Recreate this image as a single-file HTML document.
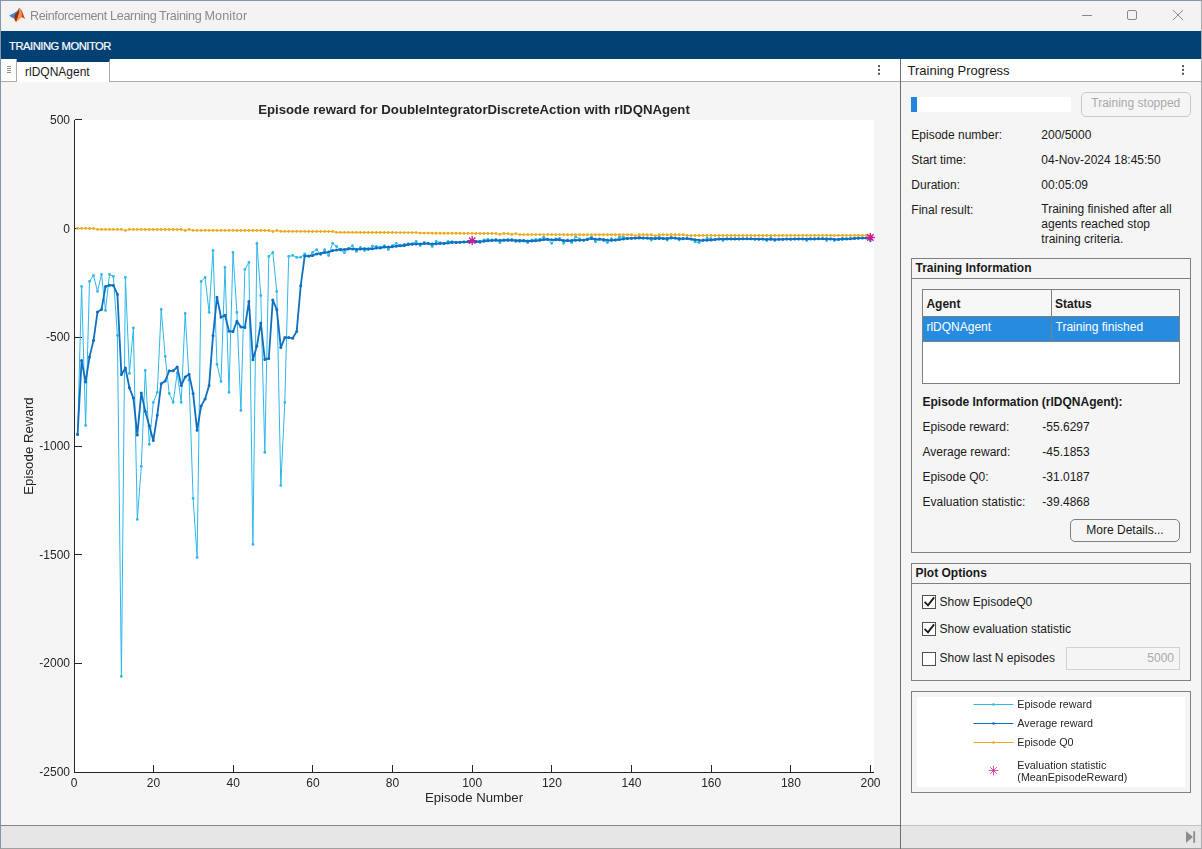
<!DOCTYPE html>
<html lang="en">
<head>
<meta charset="utf-8">
<title>Reinforcement Learning Training Monitor</title>
<style>
*{box-sizing:border-box;margin:0;padding:0}
html,body{width:1202px;height:849px;overflow:hidden;background:#f5f5f5}
body{font-family:"Liberation Sans",Arial,sans-serif;font-size:12px;color:#1a1a1a;position:relative}
.abs{position:absolute}
#win{position:absolute;left:0;top:0;width:1202px;height:849px;border:1px solid #8496a9;border-bottom-color:#a0a0a0;border-right-color:#a9abae;overflow:hidden}
#titlebar{left:1px;top:1px;width:1200px;height:30px;background:#f3f3f3}
#wtitle{will-change:transform;left:30.3px;top:8.7px;width:230px;height:16px;font-size:12.6px;color:#8a8a8a;white-space:nowrap;letter-spacing:-0.3px}
#band{left:1px;top:31px;width:1200px;height:28px;background:#004073}
#bandtxt{-webkit-text-stroke:0.2px #fff;left:9px;top:40.2px;font-size:11.2px;color:#fff;white-space:nowrap;letter-spacing:-0.45px}
#tabbar{left:1px;top:59px;width:899px;height:23px;background:#fff;border-bottom:1px solid #ababab}
#grip{left:1px;top:59px;width:16px;height:23px;background:#fff;border-right:1px solid #ababab;border-bottom:1px solid #ababab}
#tab{left:17px;top:59px;width:93px;height:23px;background:#fff;border-top:3px solid #004073;border-right:1px solid #ababab}
#tabtxt{left:25px;top:64.5px;font-size:12px;white-space:nowrap}
#rhead{left:901px;top:59px;width:300px;height:23px;background:#fff;border-bottom:1px solid #ababab}
#rheadtxt{left:907.5px;top:63px;font-size:13px;white-space:nowrap}
#vdiv{left:900px;top:59px;width:1px;height:790px;background:#6e6e6e}
.status{top:825px;height:23px;background:#e6e6e6;border-top:1px solid #b9b9b9}
.t{position:absolute;white-space:nowrap;line-height:14px}
.b{font-weight:bold}
.panel{position:absolute;border:1px solid #7f7f7f}
.ptitle{position:absolute;left:0;top:0;right:0;height:20px;border-bottom:1px solid #7f7f7f}
.cb{position:absolute;width:14px;height:14px;border:1px solid #505050;background:#fff}
</style>
</head>
<body>
<div id="win"></div>
<div id="titlebar" class="abs"></div>
<svg class="abs" style="left:4px;top:2px" width="30" height="26" viewBox="4 2 30 26">
  <defs>
    <linearGradient id="lgb" x1="0" y1="0" x2="1" y2="0"><stop offset="0" stop-color="#3a9ae6"/><stop offset="0.6" stop-color="#2a7fd0"/><stop offset="1" stop-color="#1d4f96"/></linearGradient>
    <linearGradient id="lgr" x1="0" y1="0" x2="1" y2="1"><stop offset="0" stop-color="#6e1712"/><stop offset="0.55" stop-color="#a52a1a"/><stop offset="1" stop-color="#e8651f"/></linearGradient>
    <linearGradient id="lgo" x1="0" y1="0" x2="0" y2="1"><stop offset="0" stop-color="#e8871f"/><stop offset="0.6" stop-color="#f19a2e"/><stop offset="1" stop-color="#f6b21f"/></linearGradient>
  </defs>
  <path d="M9.05,15.5 L11.65,14.2 L14.1,13 L16.2,11.8 L17.8,10.3 L19,8.1 L19,8.8 L17.9,11.1 L16.3,12.7 L14.8,14.4 L14.3,16.4 L14.1,18.2 L11.65,17.6 Z" fill="url(#lgb)"/>
  <path d="M19,8.8 L19.6,7.7 L19.5,12 L18.2,17 L16.2,22.3 L15,20.6 L14.1,18.2 L14.3,16.4 L14.8,14.4 L16.3,12.7 L17.9,11.1 Z" fill="url(#lgr)"/>
  <path d="M19.6,7.7 L20.7,9 L21.6,13.5 L21.3,17.2 L19.2,19.6 L16.2,22.3 L18.2,17 L19.5,12 Z" fill="url(#lgo)"/>
  <path d="M20.7,9 L22.4,12 L23.9,16 L25.1,19.2 L23.3,17.7 L21.3,17.2 L21.6,13.5 Z" fill="#cc4320"/>
</svg>
<div id="wtitle" class="abs"><span style="position:absolute;left:0;letter-spacing:-0.39px">Reinforcement </span><span style="position:absolute;left:80.1px;letter-spacing:-0.35px">Learning </span><span style="position:absolute;left:129.1px;letter-spacing:-0.35px">Training </span><span style="position:absolute;left:174.5px;letter-spacing:0.1px">Monitor</span></div>
<svg class="abs" style="left:1070px;top:1px" width="130" height="30" viewBox="1070 1 130 30" fill="none" stroke="#8a8a8a" stroke-width="1">
  <path d="M1082,15.5H1092"/>
  <rect x="1127.5" y="10.5" width="9" height="9" rx="1.5"/>
  <path d="M1173,10.2L1183,20M1183,10.2L1173,20"/>
</svg>
<div id="band" class="abs"></div>
<div id="bandtxt" class="abs">TRAINING MONITOR</div>

<div id="tabbar" class="abs"></div>
<div id="grip" class="abs"></div>
<svg class="abs" style="left:5px;top:64px" width="8" height="12" viewBox="0 0 8 12" stroke="#909090" stroke-width="1" fill="none"><path d="M2,2.5H6M2,4.5H6M2,6.5H6M2,8.5H6"/></svg>
<div id="tab" class="abs"></div>
<div id="tabtxt" class="abs">rlDQNAgent</div>
<svg class="abs" style="left:877px;top:64px" width="4" height="13" viewBox="0 0 4 13" fill="#555"><rect x="1" y="1.1" width="2" height="2"/><rect x="1" y="4.9" width="2" height="2"/><rect x="1" y="8.8" width="2" height="2"/></svg>

<div id="rhead" class="abs"></div>
<div id="rheadtxt" class="abs">Training Progress</div>
<svg class="abs" style="left:1181px;top:64px" width="4" height="13" viewBox="0 0 4 13" fill="#555"><rect x="1" y="1.1" width="2" height="2"/><rect x="1" y="4.9" width="2" height="2"/><rect x="1" y="8.8" width="2" height="2"/></svg>

<!-- ======== CHART ======== -->
<svg class="abs" style="left:0;top:82px;will-change:transform" width="900" height="743" viewBox="0 82 900 743" font-family="Liberation Sans, Arial, sans-serif">
  <rect x="75" y="120" width="799" height="652" fill="#fff"/>
  <g stroke="#262626" stroke-width="1" fill="none" shape-rendering="crispEdges">
    <path d="M74.5,119.5V772.5"/>
    <path d="M74,772.5H874"/>
    <path d="M75,119.5H82M75,228.5H82M75,337.5H82M75,446.5H82M75,554.5H82M75,663.5H82"/>
    <path d="M153.5,772V765M233.5,772V765M312.5,772V765M392.5,772V765M472.5,772V765M551.5,772V765M631.5,772V765M711.5,772V765M790.5,772V765M870.5,772V765"/>
  </g>
  <g>
<polyline points="77.6,434.4 81.6,286.4 85.6,425.4 89.5,281.4 93.5,275.4 97.5,291.4 101.5,274.4 105.5,310.4 109.5,274.4 113.4,276.4 117.4,335.4 121.4,676.4 125.4,277.4 129.4,373.4 133.4,328.0 137.3,519.4 141.3,466.4 145.3,370.4 149.3,444.4 153.3,402.4 157.3,392.4 161.2,309.4 165.2,356.4 169.2,393.4 173.2,402.4 177.2,373.0 181.2,402.4 185.2,313.4 189.1,380.0 193.1,498.4 197.1,557.4 201.1,281.4 205.1,277.4 209.1,312.4 213.0,250.4 217.0,364.4 221.0,381.4 225.0,267.4 229.0,392.4 233.0,252.4 236.9,312.4 240.9,410.4 244.9,269.4 248.9,262.4 252.9,544.4 256.9,243.4 260.8,295.4 264.8,452.4 268.8,256.4 272.8,252.4 276.8,291.4 280.8,485.4 284.8,402.4 288.7,256.4 292.7,255.4 296.7,257.4 300.7,257.2 304.7,254.0 308.7,256.4 312.6,252.4 316.6,249.6 320.6,254.6 324.6,249.6 328.6,255.6 332.6,243.3 336.5,246.5 340.5,250.0 344.5,252.7 348.5,249.0 352.5,245.6 356.5,251.4 360.4,247.5 364.4,250.6 368.4,249.6 372.4,246.2 376.4,246.5 380.4,247.2 384.4,245.6 388.3,249.6 392.3,245.6 396.3,243.3 400.3,245.6 404.3,244.3 408.3,243.7 412.2,243.7 416.2,241.5 420.2,245.6 424.2,242.5 428.2,243.7 432.2,246.5 436.1,241.5 440.1,242.7 444.1,243.3 448.1,241.5 452.1,241.6 456.1,242.3 460.0,242.3 464.0,241.9 468.0,241.6 472.0,241.2 476.0,241.9 480.0,242.5 484.0,240.0 487.9,239.3 491.9,240.0 495.9,239.4 499.9,242.7 503.9,239.8 507.9,239.4 511.8,239.4 515.8,241.5 519.8,241.5 523.8,241.2 527.8,242.7 531.8,240.0 535.7,239.4 539.7,239.4 543.7,237.1 547.7,239.4 551.7,243.3 555.7,238.8 559.6,238.5 563.6,243.3 567.6,240.0 571.6,242.7 575.6,236.8 579.6,238.8 583.6,240.6 587.5,238.8 591.5,236.8 595.5,241.8 599.5,238.8 603.5,240.6 607.5,242.7 611.4,238.7 615.4,240.0 619.4,236.8 623.4,237.1 627.4,238.5 631.4,238.4 635.3,238.2 639.3,236.8 643.3,238.2 647.3,238.3 651.3,240.0 655.3,238.5 659.2,236.9 663.2,238.3 667.2,240.0 671.2,236.9 675.2,238.2 679.2,240.0 683.2,238.5 687.1,238.7 691.1,239.2 695.1,241.8 699.1,242.7 703.1,240.0 707.1,238.1 711.0,238.7 715.0,239.4 719.0,239.0 723.0,240.6 727.0,238.7 731.0,238.7 734.9,238.7 738.9,238.8 742.9,238.8 746.9,238.8 750.9,238.9 754.9,239.4 758.8,239.4 762.8,239.1 766.8,240.6 770.8,237.6 774.8,240.6 778.8,239.2 782.8,239.2 786.7,239.1 790.7,239.0 794.7,238.9 798.7,238.8 802.7,238.8 806.7,240.6 810.6,238.6 814.6,238.6 818.6,238.6 822.6,238.5 826.6,240.6 830.6,238.8 834.5,240.6 838.5,239.1 842.5,238.1 846.5,238.6 850.5,238.4 854.5,238.2 858.4,238.0 862.4,237.9 866.4,237.8 870.4,240.8" fill="none" stroke="#2db7ec" stroke-width="1" stroke-linejoin="round"/>
<path d="M77.6,434.4h0M81.6,286.4h0M85.6,425.4h0M89.5,281.4h0M93.5,275.4h0M97.5,291.4h0M101.5,274.4h0M105.5,310.4h0M109.5,274.4h0M113.4,276.4h0M117.4,335.4h0M121.4,676.4h0M125.4,277.4h0M129.4,373.4h0M133.4,328.0h0M137.3,519.4h0M141.3,466.4h0M145.3,370.4h0M149.3,444.4h0M153.3,402.4h0M157.3,392.4h0M161.2,309.4h0M165.2,356.4h0M169.2,393.4h0M173.2,402.4h0M177.2,373.0h0M181.2,402.4h0M185.2,313.4h0M189.1,380.0h0M193.1,498.4h0M197.1,557.4h0M201.1,281.4h0M205.1,277.4h0M209.1,312.4h0M213.0,250.4h0M217.0,364.4h0M221.0,381.4h0M225.0,267.4h0M229.0,392.4h0M233.0,252.4h0M236.9,312.4h0M240.9,410.4h0M244.9,269.4h0M248.9,262.4h0M252.9,544.4h0M256.9,243.4h0M260.8,295.4h0M264.8,452.4h0M268.8,256.4h0M272.8,252.4h0M276.8,291.4h0M280.8,485.4h0M284.8,402.4h0M288.7,256.4h0M292.7,255.4h0M296.7,257.4h0M300.7,257.2h0M304.7,254.0h0M308.7,256.4h0M312.6,252.4h0M316.6,249.6h0M320.6,254.6h0M324.6,249.6h0M328.6,255.6h0M332.6,243.3h0M336.5,246.5h0M340.5,250.0h0M344.5,252.7h0M348.5,249.0h0M352.5,245.6h0M356.5,251.4h0M360.4,247.5h0M364.4,250.6h0M368.4,249.6h0M372.4,246.2h0M376.4,246.5h0M380.4,247.2h0M384.4,245.6h0M388.3,249.6h0M392.3,245.6h0M396.3,243.3h0M400.3,245.6h0M404.3,244.3h0M408.3,243.7h0M412.2,243.7h0M416.2,241.5h0M420.2,245.6h0M424.2,242.5h0M428.2,243.7h0M432.2,246.5h0M436.1,241.5h0M440.1,242.7h0M444.1,243.3h0M448.1,241.5h0M452.1,241.6h0M456.1,242.3h0M460.0,242.3h0M464.0,241.9h0M468.0,241.6h0M472.0,241.2h0M476.0,241.9h0M480.0,242.5h0M484.0,240.0h0M487.9,239.3h0M491.9,240.0h0M495.9,239.4h0M499.9,242.7h0M503.9,239.8h0M507.9,239.4h0M511.8,239.4h0M515.8,241.5h0M519.8,241.5h0M523.8,241.2h0M527.8,242.7h0M531.8,240.0h0M535.7,239.4h0M539.7,239.4h0M543.7,237.1h0M547.7,239.4h0M551.7,243.3h0M555.7,238.8h0M559.6,238.5h0M563.6,243.3h0M567.6,240.0h0M571.6,242.7h0M575.6,236.8h0M579.6,238.8h0M583.6,240.6h0M587.5,238.8h0M591.5,236.8h0M595.5,241.8h0M599.5,238.8h0M603.5,240.6h0M607.5,242.7h0M611.4,238.7h0M615.4,240.0h0M619.4,236.8h0M623.4,237.1h0M627.4,238.5h0M631.4,238.4h0M635.3,238.2h0M639.3,236.8h0M643.3,238.2h0M647.3,238.3h0M651.3,240.0h0M655.3,238.5h0M659.2,236.9h0M663.2,238.3h0M667.2,240.0h0M671.2,236.9h0M675.2,238.2h0M679.2,240.0h0M683.2,238.5h0M687.1,238.7h0M691.1,239.2h0M695.1,241.8h0M699.1,242.7h0M703.1,240.0h0M707.1,238.1h0M711.0,238.7h0M715.0,239.4h0M719.0,239.0h0M723.0,240.6h0M727.0,238.7h0M731.0,238.7h0M734.9,238.7h0M738.9,238.8h0M742.9,238.8h0M746.9,238.8h0M750.9,238.9h0M754.9,239.4h0M758.8,239.4h0M762.8,239.1h0M766.8,240.6h0M770.8,237.6h0M774.8,240.6h0M778.8,239.2h0M782.8,239.2h0M786.7,239.1h0M790.7,239.0h0M794.7,238.9h0M798.7,238.8h0M802.7,238.8h0M806.7,240.6h0M810.6,238.6h0M814.6,238.6h0M818.6,238.6h0M822.6,238.5h0M826.6,240.6h0M830.6,238.8h0M834.5,240.6h0M838.5,239.1h0M842.5,238.1h0M846.5,238.6h0M850.5,238.4h0M854.5,238.2h0M858.4,238.0h0M862.4,237.9h0M866.4,237.8h0M870.4,240.8h0" stroke="#2db7ec" stroke-width="2.84" stroke-linecap="round" fill="none"/>
<polyline points="77.6,434.4 81.6,360.4 85.6,382.1 89.5,356.9 93.5,340.6 97.5,312.0 101.5,309.6 105.5,286.6 109.5,285.2 113.4,285.4 117.4,294.2 121.4,374.6 125.4,368.0 129.4,387.8 133.4,398.1 137.3,434.9 141.3,392.9 145.3,411.5 149.3,425.7 153.3,440.6 157.3,415.2 161.2,383.8 165.2,381.0 169.2,370.8 173.2,370.8 177.2,366.9 181.2,385.5 185.2,376.9 189.1,374.2 193.1,393.4 197.1,430.3 201.1,406.1 205.1,398.9 209.1,385.4 213.0,335.8 217.0,297.2 221.0,317.2 225.0,315.2 229.0,331.2 233.0,331.6 236.9,321.2 240.9,327.0 244.9,327.4 248.9,301.4 252.9,359.8 256.9,346.0 260.8,323.0 264.8,359.6 268.8,358.4 272.8,300.0 276.8,309.6 280.8,347.6 284.8,337.6 288.7,337.6 292.7,338.2 296.7,331.4 300.7,285.8 304.7,256.1 308.7,256.1 312.6,255.5 316.6,253.9 320.6,253.5 324.6,252.6 328.6,252.1 332.6,250.6 336.5,250.1 340.5,249.4 344.5,249.6 348.5,248.7 352.5,248.9 356.5,249.4 360.4,249.0 364.4,248.7 368.4,248.8 372.4,248.8 376.4,248.1 380.4,247.9 384.4,247.1 388.3,247.0 392.3,246.7 396.3,246.2 400.3,245.8 404.3,245.5 408.3,244.6 412.2,244.2 416.2,243.9 420.2,243.9 424.2,243.6 428.2,243.6 432.2,243.9 436.1,243.8 440.1,243.4 444.1,243.4 448.1,243.1 452.1,242.4 456.1,242.4 460.0,242.3 464.0,241.9 468.0,241.8 472.0,241.6 476.0,241.5 480.0,241.5 484.0,241.2 487.9,240.8 491.9,240.6 495.9,240.3 499.9,240.3 503.9,240.2 507.9,240.3 511.8,240.2 515.8,240.5 519.8,240.4 523.8,240.6 527.8,241.0 531.8,241.0 535.7,240.8 539.7,240.3 543.7,239.6 547.7,239.3 551.7,239.8 555.7,239.8 559.6,239.7 563.6,240.5 567.6,240.6 571.6,240.5 575.6,240.2 579.6,240.2 583.6,239.9 587.5,239.5 591.5,238.5 595.5,239.2 599.5,239.3 603.5,239.5 607.5,240.1 611.4,240.3 615.4,240.1 619.4,239.6 623.4,238.9 627.4,238.4 631.4,238.3 635.3,238.0 639.3,237.9 643.3,238.1 647.3,238.1 651.3,238.3 655.3,238.4 659.2,238.4 663.2,238.4 667.2,238.5 671.2,238.1 675.2,238.1 679.2,238.6 683.2,238.7 687.1,238.6 691.1,239.0 695.1,239.7 699.1,240.2 703.1,240.3 707.1,240.2 711.0,240.0 715.0,239.6 719.0,239.0 723.0,239.0 727.0,239.0 731.0,239.0 734.9,239.0 738.9,239.0 742.9,238.8 746.9,238.8 750.9,238.8 754.9,238.9 758.8,239.0 762.8,239.1 766.8,239.3 770.8,239.2 774.8,239.4 778.8,239.3 782.8,239.3 786.7,239.1 790.7,239.2 794.7,239.0 798.7,238.9 802.7,238.9 806.7,239.0 810.6,239.0 814.6,238.9 818.6,238.8 822.6,238.8 826.6,238.8 830.6,238.9 834.5,239.2 838.5,239.4 842.5,239.2 846.5,238.9 850.5,238.8 854.5,238.4 858.4,238.2 862.4,238.1 866.4,237.9 870.4,238.2" fill="none" stroke="#0f6fc1" stroke-width="1.8" stroke-linejoin="round"/>
<path d="M77.6,434.4h0M81.6,360.4h0M85.6,382.1h0M89.5,356.9h0M93.5,340.6h0M97.5,312.0h0M101.5,309.6h0M105.5,286.6h0M109.5,285.2h0M113.4,285.4h0M117.4,294.2h0M121.4,374.6h0M125.4,368.0h0M129.4,387.8h0M133.4,398.1h0M137.3,434.9h0M141.3,392.9h0M145.3,411.5h0M149.3,425.7h0M153.3,440.6h0M157.3,415.2h0M161.2,383.8h0M165.2,381.0h0M169.2,370.8h0M173.2,370.8h0M177.2,366.9h0M181.2,385.5h0M185.2,376.9h0M189.1,374.2h0M193.1,393.4h0M197.1,430.3h0M201.1,406.1h0M205.1,398.9h0M209.1,385.4h0M213.0,335.8h0M217.0,297.2h0M221.0,317.2h0M225.0,315.2h0M229.0,331.2h0M233.0,331.6h0M236.9,321.2h0M240.9,327.0h0M244.9,327.4h0M248.9,301.4h0M252.9,359.8h0M256.9,346.0h0M260.8,323.0h0M264.8,359.6h0M268.8,358.4h0M272.8,300.0h0M276.8,309.6h0M280.8,347.6h0M284.8,337.6h0M288.7,337.6h0M292.7,338.2h0M296.7,331.4h0M300.7,285.8h0M304.7,256.1h0M308.7,256.1h0M312.6,255.5h0M316.6,253.9h0M320.6,253.5h0M324.6,252.6h0M328.6,252.1h0M332.6,250.6h0M336.5,250.1h0M340.5,249.4h0M344.5,249.6h0M348.5,248.7h0M352.5,248.9h0M356.5,249.4h0M360.4,249.0h0M364.4,248.7h0M368.4,248.8h0M372.4,248.8h0M376.4,248.1h0M380.4,247.9h0M384.4,247.1h0M388.3,247.0h0M392.3,246.7h0M396.3,246.2h0M400.3,245.8h0M404.3,245.5h0M408.3,244.6h0M412.2,244.2h0M416.2,243.9h0M420.2,243.9h0M424.2,243.6h0M428.2,243.6h0M432.2,243.9h0M436.1,243.8h0M440.1,243.4h0M444.1,243.4h0M448.1,243.1h0M452.1,242.4h0M456.1,242.4h0M460.0,242.3h0M464.0,241.9h0M468.0,241.8h0M472.0,241.6h0M476.0,241.5h0M480.0,241.5h0M484.0,241.2h0M487.9,240.8h0M491.9,240.6h0M495.9,240.3h0M499.9,240.3h0M503.9,240.2h0M507.9,240.3h0M511.8,240.2h0M515.8,240.5h0M519.8,240.4h0M523.8,240.6h0M527.8,241.0h0M531.8,241.0h0M535.7,240.8h0M539.7,240.3h0M543.7,239.6h0M547.7,239.3h0M551.7,239.8h0M555.7,239.8h0M559.6,239.7h0M563.6,240.5h0M567.6,240.6h0M571.6,240.5h0M575.6,240.2h0M579.6,240.2h0M583.6,239.9h0M587.5,239.5h0M591.5,238.5h0M595.5,239.2h0M599.5,239.3h0M603.5,239.5h0M607.5,240.1h0M611.4,240.3h0M615.4,240.1h0M619.4,239.6h0M623.4,238.9h0M627.4,238.4h0M631.4,238.3h0M635.3,238.0h0M639.3,237.9h0M643.3,238.1h0M647.3,238.1h0M651.3,238.3h0M655.3,238.4h0M659.2,238.4h0M663.2,238.4h0M667.2,238.5h0M671.2,238.1h0M675.2,238.1h0M679.2,238.6h0M683.2,238.7h0M687.1,238.6h0M691.1,239.0h0M695.1,239.7h0M699.1,240.2h0M703.1,240.3h0M707.1,240.2h0M711.0,240.0h0M715.0,239.6h0M719.0,239.0h0M723.0,239.0h0M727.0,239.0h0M731.0,239.0h0M734.9,239.0h0M738.9,239.0h0M742.9,238.8h0M746.9,238.8h0M750.9,238.8h0M754.9,238.9h0M758.8,239.0h0M762.8,239.1h0M766.8,239.3h0M770.8,239.2h0M774.8,239.4h0M778.8,239.3h0M782.8,239.3h0M786.7,239.1h0M790.7,239.2h0M794.7,239.0h0M798.7,238.9h0M802.7,238.9h0M806.7,239.0h0M810.6,239.0h0M814.6,238.9h0M818.6,238.8h0M822.6,238.8h0M826.6,238.8h0M830.6,238.9h0M834.5,239.2h0M838.5,239.4h0M842.5,239.2h0M846.5,238.9h0M850.5,238.8h0M854.5,238.4h0M858.4,238.2h0M862.4,238.1h0M866.4,237.9h0M870.4,238.2h0" stroke="#0f6fc1" stroke-width="3.04" stroke-linecap="round" fill="none"/>
<polyline points="77.6,228.4 81.6,228.4 85.6,228.4 89.5,228.5 93.5,228.5 97.5,229.4 101.5,229.4 105.5,229.4 109.5,229.4 113.4,229.4 117.4,229.4 121.4,229.4 125.4,230.4 129.4,229.4 133.4,229.4 137.3,229.4 141.3,229.4 145.3,229.5 149.3,229.5 153.3,229.5 157.3,229.5 161.2,229.5 165.2,229.5 169.2,229.5 173.2,229.5 177.2,229.5 181.2,229.5 185.2,230.5 189.1,229.5 193.1,230.4 197.1,230.4 201.1,230.4 205.1,230.4 209.1,230.4 213.0,230.4 217.0,230.4 221.0,230.4 225.0,230.4 229.0,230.4 233.0,230.4 236.9,230.5 240.9,230.5 244.9,230.5 248.9,230.5 252.9,230.5 256.9,230.5 260.8,230.5 264.8,230.5 268.8,230.5 272.8,231.5 276.8,230.5 280.8,231.4 284.8,231.4 288.7,231.4 292.7,231.4 296.7,231.4 300.7,231.4 304.7,231.4 308.7,231.5 312.6,231.5 316.6,231.5 320.6,231.5 324.6,231.5 328.6,231.5 332.6,231.5 336.5,232.4 340.5,232.4 344.5,232.4 348.5,232.4 352.5,232.4 356.5,232.4 360.4,232.5 364.4,232.5 368.4,232.5 372.4,232.5 376.4,232.5 380.4,232.5 384.4,232.5 388.3,232.5 392.3,232.5 396.3,232.6 400.3,232.6 404.3,232.6 408.3,232.6 412.2,232.6 416.2,232.6 420.2,233.1 424.2,233.1 428.2,233.1 432.2,233.2 436.1,233.2 440.1,233.2 444.1,233.2 448.1,233.3 452.1,233.3 456.1,233.3 460.0,233.3 464.0,233.4 468.0,233.4 472.0,233.4 476.0,233.4 480.0,233.4 484.0,233.5 487.9,233.5 491.9,233.5 495.9,233.5 499.9,234.4 503.9,233.5 507.9,233.6 511.8,234.5 515.8,233.6 519.8,234.6 523.8,234.6 527.8,234.6 531.8,234.6 535.7,234.6 539.7,234.6 543.7,234.6 547.7,234.6 551.7,234.6 555.7,234.6 559.6,234.6 563.6,234.7 567.6,234.7 571.6,234.7 575.6,234.7 579.6,234.7 583.6,234.7 587.5,234.7 591.5,234.7 595.5,234.7 599.5,234.7 603.5,234.7 607.5,234.7 611.4,234.7 615.4,234.7 619.4,234.7 623.4,234.7 627.4,234.7 631.4,234.7 635.3,235.6 639.3,234.7 643.3,234.8 647.3,234.8 651.3,234.8 655.3,235.7 659.2,234.8 663.2,234.8 667.2,234.8 671.2,234.8 675.2,234.8 679.2,234.8 683.2,234.8 687.1,235.5 691.1,235.5 695.1,235.5 699.1,235.5 703.1,235.5 707.1,235.5 711.0,235.5 715.0,235.5 719.0,235.5 723.0,235.5 727.0,235.5 731.0,235.5 734.9,235.5 738.9,235.5 742.9,235.5 746.9,235.5 750.9,235.5 754.9,235.5 758.8,235.5 762.8,235.5 766.8,235.5 770.8,235.5 774.8,235.5 778.8,235.4 782.8,235.4 786.7,235.4 790.7,235.4 794.7,235.4 798.7,235.4 802.7,235.4 806.7,235.4 810.6,235.4 814.6,235.4 818.6,235.4 822.6,235.4 826.6,235.4 830.6,235.4 834.5,235.4 838.5,235.4 842.5,235.4 846.5,235.4 850.5,235.4 854.5,235.4 858.4,235.4 862.4,235.4 866.4,235.4 870.4,235.4" fill="none" stroke="#ecab1f" stroke-width="1" stroke-linejoin="round"/>
<path d="M77.6,228.4h0M81.6,228.4h0M85.6,228.4h0M89.5,228.5h0M93.5,228.5h0M97.5,229.4h0M101.5,229.4h0M105.5,229.4h0M109.5,229.4h0M113.4,229.4h0M117.4,229.4h0M121.4,229.4h0M125.4,230.4h0M129.4,229.4h0M133.4,229.4h0M137.3,229.4h0M141.3,229.4h0M145.3,229.5h0M149.3,229.5h0M153.3,229.5h0M157.3,229.5h0M161.2,229.5h0M165.2,229.5h0M169.2,229.5h0M173.2,229.5h0M177.2,229.5h0M181.2,229.5h0M185.2,230.5h0M189.1,229.5h0M193.1,230.4h0M197.1,230.4h0M201.1,230.4h0M205.1,230.4h0M209.1,230.4h0M213.0,230.4h0M217.0,230.4h0M221.0,230.4h0M225.0,230.4h0M229.0,230.4h0M233.0,230.4h0M236.9,230.5h0M240.9,230.5h0M244.9,230.5h0M248.9,230.5h0M252.9,230.5h0M256.9,230.5h0M260.8,230.5h0M264.8,230.5h0M268.8,230.5h0M272.8,231.5h0M276.8,230.5h0M280.8,231.4h0M284.8,231.4h0M288.7,231.4h0M292.7,231.4h0M296.7,231.4h0M300.7,231.4h0M304.7,231.4h0M308.7,231.5h0M312.6,231.5h0M316.6,231.5h0M320.6,231.5h0M324.6,231.5h0M328.6,231.5h0M332.6,231.5h0M336.5,232.4h0M340.5,232.4h0M344.5,232.4h0M348.5,232.4h0M352.5,232.4h0M356.5,232.4h0M360.4,232.5h0M364.4,232.5h0M368.4,232.5h0M372.4,232.5h0M376.4,232.5h0M380.4,232.5h0M384.4,232.5h0M388.3,232.5h0M392.3,232.5h0M396.3,232.6h0M400.3,232.6h0M404.3,232.6h0M408.3,232.6h0M412.2,232.6h0M416.2,232.6h0M420.2,233.1h0M424.2,233.1h0M428.2,233.1h0M432.2,233.2h0M436.1,233.2h0M440.1,233.2h0M444.1,233.2h0M448.1,233.3h0M452.1,233.3h0M456.1,233.3h0M460.0,233.3h0M464.0,233.4h0M468.0,233.4h0M472.0,233.4h0M476.0,233.4h0M480.0,233.4h0M484.0,233.5h0M487.9,233.5h0M491.9,233.5h0M495.9,233.5h0M499.9,234.4h0M503.9,233.5h0M507.9,233.6h0M511.8,234.5h0M515.8,233.6h0M519.8,234.6h0M523.8,234.6h0M527.8,234.6h0M531.8,234.6h0M535.7,234.6h0M539.7,234.6h0M543.7,234.6h0M547.7,234.6h0M551.7,234.6h0M555.7,234.6h0M559.6,234.6h0M563.6,234.7h0M567.6,234.7h0M571.6,234.7h0M575.6,234.7h0M579.6,234.7h0M583.6,234.7h0M587.5,234.7h0M591.5,234.7h0M595.5,234.7h0M599.5,234.7h0M603.5,234.7h0M607.5,234.7h0M611.4,234.7h0M615.4,234.7h0M619.4,234.7h0M623.4,234.7h0M627.4,234.7h0M631.4,234.7h0M635.3,235.6h0M639.3,234.7h0M643.3,234.8h0M647.3,234.8h0M651.3,234.8h0M655.3,235.7h0M659.2,234.8h0M663.2,234.8h0M667.2,234.8h0M671.2,234.8h0M675.2,234.8h0M679.2,234.8h0M683.2,234.8h0M687.1,235.5h0M691.1,235.5h0M695.1,235.5h0M699.1,235.5h0M703.1,235.5h0M707.1,235.5h0M711.0,235.5h0M715.0,235.5h0M719.0,235.5h0M723.0,235.5h0M727.0,235.5h0M731.0,235.5h0M734.9,235.5h0M738.9,235.5h0M742.9,235.5h0M746.9,235.5h0M750.9,235.5h0M754.9,235.5h0M758.8,235.5h0M762.8,235.5h0M766.8,235.5h0M770.8,235.5h0M774.8,235.5h0M778.8,235.4h0M782.8,235.4h0M786.7,235.4h0M790.7,235.4h0M794.7,235.4h0M798.7,235.4h0M802.7,235.4h0M806.7,235.4h0M810.6,235.4h0M814.6,235.4h0M818.6,235.4h0M822.6,235.4h0M826.6,235.4h0M830.6,235.4h0M834.5,235.4h0M838.5,235.4h0M842.5,235.4h0M846.5,235.4h0M850.5,235.4h0M854.5,235.4h0M858.4,235.4h0M862.4,235.4h0M866.4,235.4h0M870.4,235.4h0" stroke="#ecab1f" stroke-width="2.9" stroke-linecap="round" fill="none"/>
<path d="M467.70,240.60L476.70,240.60M469.02,237.42L475.38,243.78M472.20,236.10L472.20,245.10M475.38,237.42L469.02,243.78" stroke="#cc1a98" stroke-width="1.3" fill="none"/>
<path d="M865.90,237.50L874.90,237.50M867.22,234.32L873.58,240.68M870.40,233.00L870.40,242.00M873.58,234.32L867.22,240.68" stroke="#cc1a98" stroke-width="1.3" fill="none"/>
  </g>
  <g font-size="12" fill="#262626" text-anchor="end">
    <text x="70" y="124">500</text>
    <text x="70" y="233">0</text>
    <text x="70" y="341">-500</text>
    <text x="70" y="450">-1000</text>
    <text x="70" y="559">-1500</text>
    <text x="70" y="667">-2000</text>
    <text x="70" y="776">-2500</text>
  </g>
  <g font-size="12" fill="#262626" text-anchor="middle">
    <text x="74.2" y="787">0</text>
    <text x="153.5" y="787">20</text>
    <text x="233.2" y="787">40</text>
    <text x="312.9" y="787">60</text>
    <text x="392.5" y="787">80</text>
    <text x="472.2" y="787">100</text>
    <text x="551.9" y="787">120</text>
    <text x="631.5" y="787">140</text>
    <text x="711.2" y="787">160</text>
    <text x="790.9" y="787">180</text>
    <text x="870.5" y="787">200</text>
  </g>
  <text x="474" y="802" font-size="13.2" fill="#262626" text-anchor="middle">Episode Number</text>
  <text transform="translate(32.6,446) rotate(-90)" font-size="13.2" letter-spacing="0.05" fill="#262626" text-anchor="middle">Episode Reward</text>
  <text x="474" y="113.5" font-size="13.2" font-weight="bold" fill="#262626" text-anchor="middle">Episode reward for DoubleIntegratorDiscreteAction with rlDQNAgent</text>
</svg>

<div class="abs status" style="left:1px;width:899px;border-top-color:#858585"></div>
<div class="abs status" style="left:901px;width:300px;border-top-color:#c2c2c2"></div>
<svg class="abs" style="left:1185px;top:830px" width="12" height="14" viewBox="0 0 12 14" fill="#8c8c8c"><path d="M1,1.2L8,7L1,12.8Z"/><rect x="8.3" y="1.2" width="1.8" height="11.6"/></svg>
<div id="vdiv" class="abs"></div>

<!-- ======== RIGHT PANEL ======== -->
<div class="abs" style="left:911px;top:97px;width:160px;height:15px;background:#fff"></div>
<div class="abs" style="left:911px;top:97px;width:6px;height:15px;background:#2385e0"></div>
<div class="abs" style="left:1080.8px;top:92.2px;width:110px;height:24.6px;border:1px solid #c9c9c9;border-radius:5px;color:#a9a9a9;text-align:center;line-height:21.5px;font-size:12px">Training stopped</div>

<div class="t" style="left:911.3px;top:128px">Episode number:</div><div class="t" style="left:1041.3px;top:128px">200/5000</div>
<div class="t" style="left:911.3px;top:153px">Start time:</div><div class="t" style="left:1041.3px;top:153px">04-Nov-2024 18:45:50</div>
<div class="t" style="left:911.3px;top:178px">Duration:</div><div class="t" style="left:1041.3px;top:178px">00:05:09</div>
<div class="t" style="left:911.3px;top:203px">Final result:</div>
<div class="t" style="left:1041.3px;top:201.8px;line-height:15px;white-space:normal;width:150px">Training finished after all agents reached stop training criteria.</div>

<div class="panel" style="left:911px;top:258px;width:280px;height:295px">
  <div class="ptitle"></div>
</div>
<div class="t b" style="left:915.5px;top:261px">Training Information</div>
<div class="abs" style="left:922px;top:289px;width:258px;height:95px;border:1px solid #7f7f7f;background:#fff"></div>
<div class="abs" style="left:923px;top:290px;width:256px;height:27px;background:#f7f7f7;border-bottom:1px solid #7f7f7f"></div>
<div class="abs" style="left:923px;top:317px;width:256px;height:24.5px;background:#278be0;border-bottom:1px solid #7f7f7f"></div>
<div class="abs" style="left:1051px;top:290px;width:1px;height:51px;background:#7f7f7f"></div>
<div class="t b" style="left:926.4px;top:297.3px">Agent</div><div class="t b" style="left:1055px;top:297.3px">Status</div>
<div class="t" style="left:926.4px;top:320.2px;color:#fff">rlDQNAgent</div><div class="t" style="left:1055.5px;top:320.2px;color:#fff">Training finished</div>
<div class="t b" style="left:922.5px;top:395.2px">Episode Information (rlDQNAgent):</div>
<div class="t" style="left:922.5px;top:420px">Episode reward:</div><div class="t" style="left:1042.3px;top:420px">-55.6297</div>
<div class="t" style="left:922.5px;top:445px">Average reward:</div><div class="t" style="left:1042.3px;top:445px">-45.1853</div>
<div class="t" style="left:922.5px;top:470px">Episode Q0:</div><div class="t" style="left:1042.3px;top:470px">-31.0187</div>
<div class="t" style="left:922.5px;top:495px">Evaluation statistic:</div><div class="t" style="left:1042.3px;top:495px">-39.4868</div>
<div class="abs" style="left:1070px;top:518.8px;width:110px;height:23px;border:1px solid #7f7f7f;border-radius:5px;text-align:center;line-height:20px;font-size:12px">More Details...</div>

<div class="panel" style="left:911px;top:563px;width:280px;height:118px">
  <div class="ptitle"></div>
</div>
<div class="t b" style="left:915.5px;top:566px">Plot Options</div>
<div class="cb" style="left:922px;top:595px"></div>
<div class="cb" style="left:922px;top:622px"></div>
<div class="cb" style="left:922px;top:652px"></div>
<svg class="abs" style="left:922px;top:595px" width="14" height="14" viewBox="0 0 14 14" fill="none" stroke="#1a1a1a" stroke-width="1.8"><path d="M2.6,6.9L6,10.4L12.1,2.4"/></svg>
<svg class="abs" style="left:922px;top:622px" width="14" height="14" viewBox="0 0 14 14" fill="none" stroke="#1a1a1a" stroke-width="1.8"><path d="M2.6,6.9L6,10.4L12.1,2.4"/></svg>
<div class="t" style="left:939.5px;top:595.2px">Show EpisodeQ0</div>
<div class="t" style="left:939.5px;top:622.2px">Show evaluation statistic</div>
<div class="t" style="left:939.5px;top:651.2px">Show last N episodes</div>
<div class="abs" style="left:1066px;top:647.2px;width:114px;height:22.6px;border:1px solid #d2d2d2;background:#f5f5f5;color:#a9a9a9;text-align:right;padding-right:5px;line-height:21px;font-size:12px">5000</div>

<div class="abs" style="left:911px;top:691.2px;width:280px;height:101.6px;border:1px solid #7f7f7f"></div>
<div class="abs" style="left:917px;top:696.5px;width:268px;height:90.5px;background:#fff"></div>
<svg class="abs" style="left:911px;top:692px;will-change:transform" width="280" height="100" viewBox="911 692 280 100" font-family="Liberation Sans, Arial, sans-serif" font-size="10.75" fill="#262626">
  <path d="M973.5,704.5H1013.5" stroke="#2db7ec" stroke-width="1"/><circle cx="993.5" cy="704.5" r="1.3" fill="#2db7ec"/>
  <path d="M973.5,723.5H1013.5" stroke="#0f6fc1" stroke-width="1"/><circle cx="993.5" cy="723.5" r="1.35" fill="#0f6fc1"/>
  <path d="M973.5,742.5H1013.5" stroke="#ecab1f" stroke-width="1"/><circle cx="993.5" cy="742.5" r="1.35" fill="#ecab1f"/>
  <path d="M988.6,770.5H998.4M993.5,765.6V775.4M990.1,767.1L996.9,773.9M996.9,767.1L990.1,773.9" stroke="#cc1a98" stroke-width="0.75" fill="none"/>
  <text x="1017.3" y="707.7">Episode reward</text>
  <text x="1017.3" y="726.8">Average reward</text>
  <text x="1017.3" y="745.9">Episode Q0</text>
  <text x="1017.3" y="768.7">Evaluation statistic</text>
  <text x="1017.3" y="780.8">(MeanEpisodeReward)</text>
</svg>
</body>
</html>
